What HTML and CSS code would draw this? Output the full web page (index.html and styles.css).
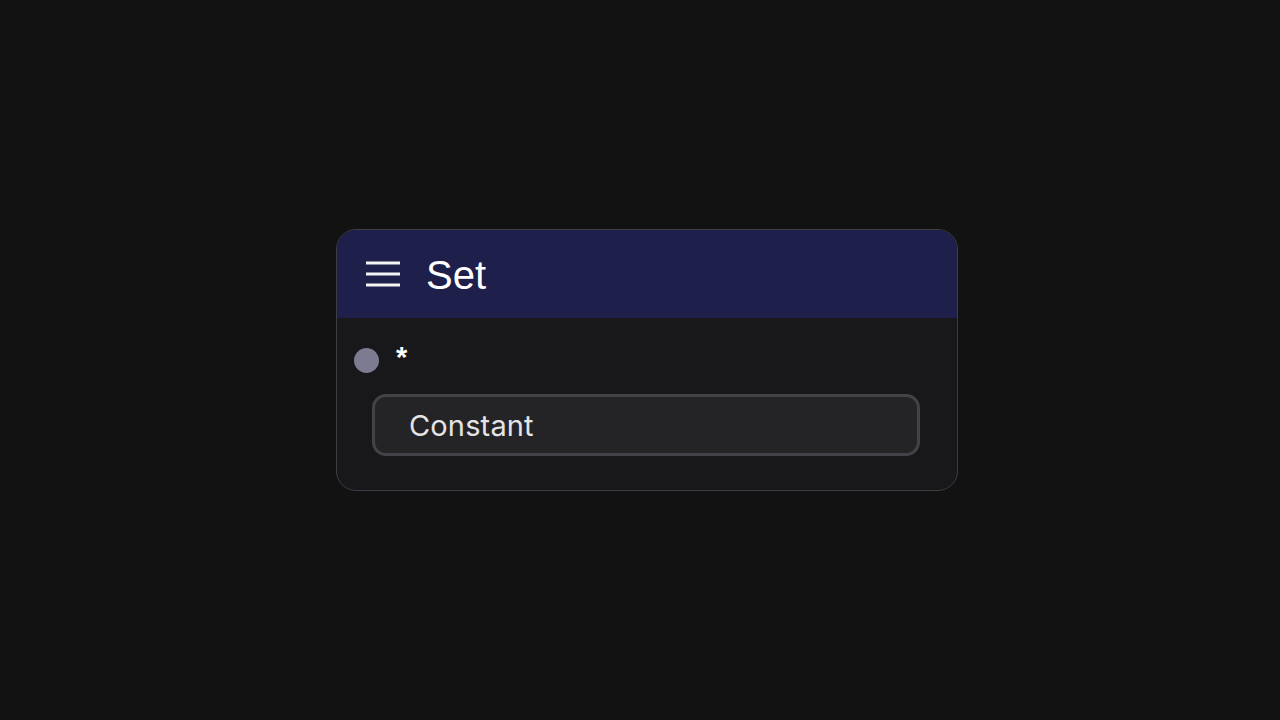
FILE: index.html
```html
<!DOCTYPE html>
<html>
<head>
<meta charset="utf-8">
<link rel="stylesheet" href="styles.css">
</head>
<body>
<div class="stage">
  <div class="node">
    <div class="node-header">
      <svg class="menu-icon" width="34" height="28" viewBox="0 0 34 28">
        <line x1="0" y1="3" x2="34" y2="3" stroke="#f4f4f5" stroke-width="3"/>
        <line x1="0" y1="14" x2="34" y2="14" stroke="#f4f4f5" stroke-width="3"/>
        <line x1="0" y1="25" x2="34" y2="25" stroke="#f4f4f5" stroke-width="3"/>
      </svg>
      <span class="title">Set</span>
    </div>
    <div class="node-body">
      <div class="port-row">
        <span class="port"></span>
        <span class="port-label">*</span>
      </div>
      <div class="field">Constant</div>
    </div>
  </div>
</div>
</body>
</html>
```
FILE: styles.css
```css
html, body {
  margin: 0;
  padding: 0;
  background: #121212;
  width: 1280px;
  height: 720px;
  overflow: hidden;
}
.stage {
  padding: 229px 0 0 336px;
}
.node {
  width: 620px;
  border: 1px solid #3d3d43;
  border-radius: 20px;
  background: #18181b;
  overflow: hidden;
}
.node-header {
  height: 88px;
  background: #1f1f4b;
  display: flex;
  align-items: center;
  padding-left: 29px;
  gap: 26px;
}
.menu-icon {
  display: block;
}
.title {
  font-family: "Liberation Sans", Arial, sans-serif;
  font-size: 40px;
  color: #ffffff;
  line-height: 1;
  margin-top: 2px;
}
.node-body {
  padding: 30px 37px 34px 17px;
  display: flex;
  flex-direction: column;
  gap: 22px;
}
.port-row {
  display: flex;
  align-items: center;
  height: 24px;
  gap: 17px;
}
.port {
  width: 25px;
  height: 25px;
  border-radius: 50%;
  background: #7d7b92;
}
.port-label {
  font-family: "Liberation Sans", Arial, sans-serif;
  font-weight: bold;
  font-size: 29px;
  color: #ffffff;
  line-height: 1;
  margin-top: -5px;
}
.field {
  margin-left: 18px;
  height: 56px;
  border: 3px solid #424249;
  border-radius: 14px;
  background: #242427;
  display: flex;
  align-items: center;
  padding-left: 34px;
  font-family: Inter, sans-serif;
  font-size: 29px;
  letter-spacing: 0.15px;
  color: #e4e4e7;
}
```
